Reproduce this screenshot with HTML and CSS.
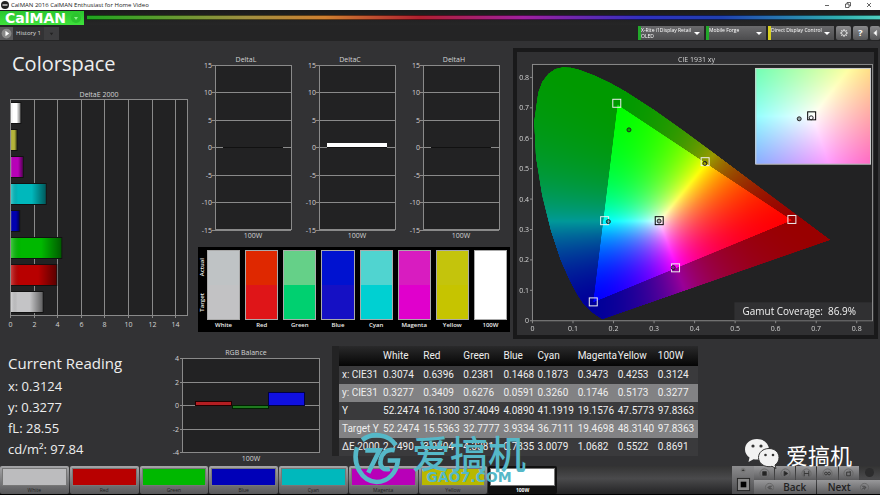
FILE: index.html
```html
<!DOCTYPE html>
<html lang="en">
<head>
    <meta charset="UTF-8">
    <meta name="viewport" content="width=device-width, initial-scale=1.0">
    <title>CalMAN 2016 CalMAN Enthusiast for Home Video</title>
    <link rel="stylesheet" href="styles.css">
</head>
<body>
    <!-- Window title -->
    <header class="titlebar">
        <svg class="app-icon" viewBox="0 0 8 8"><circle cx="4" cy="4" r="4" fill="#222"/><path d="M1.5 4h5" stroke="#ddd" stroke-width="1.4"/></svg>
        <span class="window-title">CalMAN 2016 CalMAN Enthusiast for Home Video</span>
        <button class="win-btn" aria-label="Minimize"><svg viewBox="0 0 6 6"><path d="M1 3.5h4"/></svg></button>
        <button class="win-btn" aria-label="Restore"><svg viewBox="0 0 6 6"><path d="M.5 2h3.5v3.5H.5zM2 2V.5h3.5V4H4"/></svg></button>
        <button class="win-btn" aria-label="Close"><svg viewBox="0 0 6 6"><path d="M1 1l4 4M5 1L1 5"/></svg></button>
    </header>

    <div class="brandbar">
        <button class="brand">CalMAN <svg viewBox="0 0 10 10"><circle cx="5" cy="5" r="5" fill="#2cc42e"/><path d="M3 4h4L5 7z" fill="#8df08d"/></svg></button>
        <div class="rainbow"></div>
    </div>

    <nav class="toolbar">
        <button class="play" aria-label="Play"><svg viewBox="0 0 12 12"><circle cx="6" cy="6" r="4.5" fill="#8a8a8a"/><path d="M5 3.5v5L8.5 6z" fill="#fff"/></svg></button>
        <a class="tab" href="#">History 1</a>
        <button class="add-tab" aria-label="Add tab"><svg viewBox="0 0 8 8"><path d="M2 3h4L4 6z" fill="#222"/></svg></button>
        <div class="devices">
            <label class="device"><select aria-label="Meter"><option>X-Rite i1Display Retail</option></select><span>OLED</span></label>
            <label class="device source"><select aria-label="Source"><option>Mobile Forge</option></select></label>
            <label class="device display"><select aria-label="Display"><option>Direct Display Control</option></select></label>
            <button class="tool" aria-label="Settings"><svg viewBox="0 0 12 12"><circle cx="6" cy="6" r="2.5"/><path d="M6 2v1.5M6 8.5V10M2 6h1.5M8.5 6H10M3.2 3.2l1 1M7.8 7.8l1 1M3.2 8.8l1-1M7.8 4.2l1-1"/></svg></button>
            <button class="tool" aria-label="Help">?</button>
            <button class="tool last" aria-label="Collapse"><svg viewBox="0 0 12 12"><path d="M8 3v6L4.5 6z" fill="#fff"/></svg></button>
        </div>
    </nav>

    <main>
        <section class="top">
            <div class="errors">
                <h1>Colorspace</h1>
                <svg id="deltaE" viewBox="0 0 195 247"></svg>
            </div>

            <div class="middle">
                <div class="deltas" id="deltas"></div>
                <div class="swatches">
                    <div class="side"><span>Actual</span><span>Target</span></div>
                    <div class="patches" id="patches"></div>
                </div>
            </div>

            <div class="cie">
                <canvas id="gamut" width="1432" height="1136"></canvas>
                <svg id="cieAxes" viewBox="0 0 358 284"></svg>
            </div>
        </section>

        <section class="bottom">
            <div class="reading">
                <h2>Current Reading</h2>
                <p>x: 0.3124</p>
                <p>y: 0.3277</p>
                <p>fL: 28.55</p>
                <p>cd/m²: 97.84</p>
            </div>
            <div class="balance">
                <svg id="balance" viewBox="0 0 155 120"></svg>
            </div>
            <div class="results">
                <table>
                    <thead>
                        <tr><th class="name"></th><th>White</th><th>Red</th><th>Green</th><th class="narrow">Blue</th><th>Cyan</th><th>Magenta</th><th>Yellow</th><th>100W</th></tr>
                    </thead>
                    <tbody>
                        <tr><th class="name">x: CIE31</th><td>0.3074</td><td>0.6396</td><td>0.2381</td><td>0.1468</td><td>0.1873</td><td>0.3473</td><td>0.4253</td><td>0.3124</td></tr>
                        <tr><th class="name">y: CIE31</th><td>0.3277</td><td>0.3409</td><td>0.6276</td><td>0.0591</td><td>0.3260</td><td>0.1746</td><td>0.5173</td><td>0.3277</td></tr>
                        <tr><th class="name">Y</th><td>52.2474</td><td>16.1300</td><td>37.4049</td><td>4.0890</td><td>41.1919</td><td>19.1576</td><td>47.5773</td><td>97.8363</td></tr>
                        <tr><th class="name">Target Y</th><td>52.2474</td><td>15.5363</td><td>32.7777</td><td>3.9334</td><td>36.7111</td><td>19.4698</td><td>48.3140</td><td>97.8363</td></tr>
                        <tr><th class="name">ΔE 2000</th><td>2.7490</td><td>3.9204</td><td>4.3381</td><td>0.7835</td><td>3.0079</td><td>1.0682</td><td>0.5522</td><td>0.8691</td></tr>
                    </tbody>
                </table>
            </div>
        </section>
    </main>

    <footer>
        <div class="levels" id="levels"></div>
        <div class="controls">
            <div class="stop">
                <svg viewBox="0 0 22 12"><circle cx="11" cy="5" r="3" fill="#777"/><path d="M9 6l2-2 2 2z" fill="#333"/></svg>
                <button aria-label="Stop"><svg viewBox="0 0 16 16"><rect x="1.5" y="1.5" width="13" height="13" fill="#888" stroke="#222"/><rect x="5" y="5" width="6" height="6" fill="#000"/></svg></button>
            </div>
            <div class="actions">
                <button aria-label="Halt"><svg viewBox="0 0 12 12"><circle cx="6" cy="6" r="5"/><path d="M4 4h4v4H4z" class="solid"/></svg></button>
                <button aria-label="Read"><svg viewBox="0 0 12 12"><circle cx="6" cy="6" r="5"/><path d="M4.5 3.5v5L8.5 6z" class="solid"/></svg></button>
                <button aria-label="Read series"><svg viewBox="0 0 12 12"><circle cx="6" cy="6" r="5"/><path d="M3.5 3v6M8.5 3v6M3.5 6h5"/></svg></button>
                <button aria-label="Continuous"><svg viewBox="0 0 12 12"><circle cx="6" cy="6" r="5"/><circle cx="4.3" cy="6" r="1.5" class="dark"/><circle cx="7.7" cy="6" r="1.5" class="dark"/></svg></button>
                <button aria-label="Refresh"><svg viewBox="0 0 12 12"><circle cx="6" cy="6" r="5"/><path d="M8 4.5H4v4h4zM7 3l1.5 1.5"/></svg></button>
                <span class="knob"></span>
                <button class="step"><svg viewBox="0 0 12 12"><circle cx="6" cy="6" r="4.5"/><path d="M6.5 4l-2 2 2 2M8.5 4l-2 2 2 2"/></svg>Back</button>
                <button class="step">Next<svg viewBox="0 0 12 12"><circle cx="6" cy="6" r="4.5"/><path d="M3.5 4l2 2-2 2M5.5 4l2 2-2 2"/></svg></button>
            </div>
        </div>
    </footer>

    <!-- Watermarks -->
    <div class="mark-center" lang="zh">
        <svg viewBox="0 0 50 52" fill="none" stroke="#55b8c8" stroke-width="4.5">
            <path d="M9 8C19 0 35 2 42 13"/>
            <path d="M4 15C-1 31 8 48 23 49C35 49 43 39 44 28H34"/>
            <path d="M12 18H26L15 40"/>
            <path d="M41 18C33 16 28 21 27 28C26 34 30 38 36 36"/>
        </svg>
        <div>
            <strong>爱搞机</strong>
            <span>GAO7.COM</span>
        </div>
    </div>
    <div class="mark-corner" lang="zh">
        <svg viewBox="0 0 36 31">
            <path d="M13 1C6 1 1 5.5 1 11.5c0 3.5 1.8 6 4.5 8L4.5 24l5-2.8c1.2.3 2.3.4 3.5.4 7 0 12-4.5 12-10.1S20 1 13 1z" fill="#f2f2f2"/>
            <path d="M25 10.5c-6 0-10.5 4-10.5 9s4.5 9.2 10.5 9.2c1 0 2-.1 3-.4l4 2.2-1-3.5c2.5-1.7 4-4.3 4-7.5 0-5-4-9-10-9z" fill="#f2f2f2" stroke="#333" stroke-width="1"/>
            <g fill="#333"><circle cx="9" cy="8" r="1.6"/><circle cx="17" cy="8" r="1.6"/><circle cx="21.5" cy="17" r="1.3"/><circle cx="29" cy="17" r="1.3"/></g>
        </svg>
        <span>爱搞机</span>
    </div>

    <script src="script.js"></script>
</body>
</html>
```

FILE: styles.css
```css
* {
    box-sizing: border-box;
}
body {
    margin: 0;
    min-height: 100vh;
    display: flex;
    flex-direction: column;
    position: relative;
    background: #323234;
    color: #eee;
    font-family: "Open Sans", "Noto Sans", "Noto Sans CJK SC", sans-serif;
}
button {
    border: 0;
    padding: 0;
    background: none;
    color: inherit;
    font: inherit;
    cursor: pointer;
}
svg {
    display: block;
}

/* window frame */
.titlebar {
    display: flex;
    align-items: center;
    height: 10px;
    padding: 0 8px 0 1px;
    background: #fff;
    color: #222;
    font-size: 6px;
}
.app-icon {
    width: 8px;
    height: 8px;
    margin-right: 2px;
}
.window-title {
    flex: 1;
}
.win-btn {
    width: 6px;
    margin-left: 15px;
}
.win-btn svg {
    fill: none;
    stroke: #222;
    stroke-width: 0.7;
}
.brandbar {
    display: flex;
    align-items: center;
    gap: 3px;
    height: 15px;
    background: linear-gradient(#1b1b1b, #262627);
}
.brand {
    display: flex;
    align-items: center;
    justify-content: space-between;
    width: 84px;
    height: 14px;
    padding: 0 3px 0 5px;
    background: linear-gradient(#2bc52e, #3fe23c);
    color: #fff;
    font: bold 14px/14px "DejaVu Sans", sans-serif;
}
.brand svg {
    width: 10px;
}
.rainbow {
    flex: 1;
    height: 5px;
    border: solid #0008;
    border-width: 1px 0;
    background: linear-gradient(90deg, #1fa51f, #a09040 20%, #d08030 30%, #b02030 42%, #a020a0 55%, #3030c0 70%, #2040b0 80%, #30b0b0 95%, #50d0c0);
}
.toolbar {
    display: flex;
    align-items: center;
    height: 16px;
    background: #242425;
    font-size: 6px;
}
.play {
    width: 13px;
    height: 13px;
    background: #5a5a5c;
}
.tab {
    height: 13px;
    padding: 0 3px;
    background: #333335;
    color: #ddd;
    line-height: 13px;
    text-decoration: none;
}
.add-tab {
    width: 15px;
    height: 13px;
    padding: 0 4px;
    background: #3d3d3f;
}
.devices {
    display: flex;
    gap: 2px;
    margin-left: auto;
}
.device {
    position: relative;
    display: flex;
    flex-direction: column;
    width: 66px;
    height: 14px;
    border-left: 3px solid #22a82a;
    background: linear-gradient(#6a6a6c, #4c4c4e);
    color: #fff;
    font: 5px/6px "Open Sans", sans-serif;
}
.device::after {
    content: "";
    position: absolute;
    right: 4px;
    top: 6px;
    border: solid transparent;
    border-width: 3px 3px 0;
    border-top-color: #fff;
}
.device.source {
    width: 60px;
}
.device.display {
    border-left-color: #d8d020;
}
.device select {
    appearance: none;
    width: 100%;
    height: 7px;
    padding: 0;
    border: 0;
    background: none;
    color: inherit;
    font: inherit;
}
.tool {
    width: 15px;
    height: 14px;
    border-radius: 2px;
    background: linear-gradient(#8a8a8c, #555557);
    color: #fff;
    font-size: 9px;
    font-weight: bold;
    line-height: 14px;
}
.tool svg {
    width: 12px;
    margin: 0 auto;
    fill: none;
    stroke: #ddd;
}
.tool.last {
    width: 10px;
}
.tool.last svg {
    width: 10px;
}

/* charts */
main {
    flex: 1;
}
.top {
    display: grid;
    grid-template-columns: 195fr 318fr 367fr;
}
h1 {
    height: 47px;
    margin: 0;
    padding-left: 12px;
    font-size: 20px;
    font-weight: normal;
    line-height: 45px;
}
.middle {
    padding: 12px 3px 0 0;
}
.deltas {
    display: grid;
    grid-template-columns: repeat(3, 1fr);
    padding-right: 3px;
}
.chart-text {
    fill: #d4d4d4;
    font-size: 7px;
}
.plot {
    fill: #222223;
}
.line {
    fill: none;
    stroke: #8a8a8a;
}
.swatches {
    display: flex;
    margin-left: 3px;
    padding: 3px 3px 2px 0;
    background: #000;
    font-size: 6px;
    font-weight: 600;
}
.side {
    display: flex;
    flex-direction: column;
    justify-content: space-around;
    align-items: center;
    width: 9px;
    height: 70px;
}
.side span {
    writing-mode: vertical-rl;
    transform: rotate(180deg);
    line-height: 9px;
}
.patches {
    flex: 1;
    display: grid;
    grid-template-columns: repeat(8, 1fr);
    gap: 5px;
    text-align: center;
    line-height: 10px;
}
.patch {
    height: 70px;
    border: 1px solid #aaa;
}
.cie {
    display: grid;
    align-self: start;
    margin: 7px 2px 0 0;
    border: 4px solid #19191a;
    background: #303032;
}
.cie > * {
    grid-area: 1 / 1;
    width: 100%;
    height: auto;
}
.coverage {
    fill: #f2f2f2;
    font-size: 10px;
}

/* readings */
.bottom {
    display: grid;
    grid-template-columns: 170fr 155fr 555fr;
    padding-top: 5px;
}
.reading {
    padding: 8px 0 0 8px;
}
.reading h2 {
    margin: 0 0 2px;
    font-size: 15px;
    font-weight: normal;
    line-height: 22px;
}
.reading p {
    margin: 0;
    font-size: 13px;
    line-height: 21px;
}
.results {
    padding: 2px 0 0 7px;
}
table {
    table-layout: fixed;
    width: 366px;
    border-collapse: separate;
    border-spacing: 0;
    border-left: 7px solid #232324;
    background: #3a3a3c;
    font-family: Roboto, "Open Sans", sans-serif;
    font-size: 10px;
}
th, td {
    width: 40px;
    height: 18px;
    padding: 0;
    font-weight: normal;
    line-height: 18px;
    text-align: left;
    white-space: nowrap;
}
.name {
    width: 44px;
    padding-left: 3px;
}
.narrow {
    width: 34px;
}
thead {
    background: linear-gradient(#2a2a2b, #050505);
}
thead th {
    height: 20px;
}
tbody tr:nth-child(even) {
    background: #828284;
}

/* level buttons and transport */
footer {
    display: grid;
    grid-template-columns: 557fr 175fr 148fr;
    height: 29px;
    border-bottom: 1px solid #000;
    background: linear-gradient(#333, #4a4a4c 45%, #232324);
}
.levels {
    display: grid;
    grid-template-columns: repeat(8, 1fr);
    gap: 1px;
}
.level {
    display: flex;
    flex-direction: column;
    padding: 2px 2px 0;
    border-radius: 2px;
    background: linear-gradient(#a5a5a7, #58585a);
    color: #222;
    font-size: 5px;
    line-height: 8px;
}
.level i {
    align-self: stretch;
    height: 18px;
    border: 1px solid #777;
}
.level.active {
    background: #111;
    color: #fff;
    font-weight: bold;
}
.controls {
    grid-column: 3;
    display: flex;
}
.stop {
    width: 22px;
    background: linear-gradient(#8c8c8e, #4c4c4e);
}
.stop > svg {
    height: 10px;
    margin: 0 auto;
}
.stop button {
    display: block;
    width: 15px;
    margin: 1px auto;
}
.actions {
    flex: 1;
    display: grid;
    grid-template-columns: repeat(6, 1fr);
    grid-template-rows: 14px 14px;
    gap: 0 1px;
}
.actions button {
    display: flex;
    align-items: center;
    justify-content: center;
    background: linear-gradient(#98989a, #5c5c5e);
}
.actions svg {
    width: 11px;
    fill: none;
    stroke: #333;
    stroke-width: 1;
}
.actions circle {
    stroke: #666;
}
.actions .dark {
    stroke: #333;
}
.actions .solid {
    fill: #222;
}
.actions .step {
    grid-column: span 3;
    gap: 8px;
    color: #222;
    font-size: 10px;
    font-weight: 600;
}
.knob {
    width: 9px;
    height: 9px;
    margin: 2px auto;
    border-radius: 50%;
    background: #2c2c2d;
}

/* watermarks lie over the page */
.mark-center {
    position: absolute;
    left: 353px;
    bottom: 10px;
    display: flex;
    align-items: center;
    gap: 8px;
    color: #55b8c8;
    text-align: center;
    pointer-events: none;
}
.mark-center svg {
    width: 51px;
}
.mark-center strong {
    display: block;
    font: 500 38px/38px "Noto Sans CJK SC", sans-serif;
}
.mark-center span {
    display: block;
    font: bold 14px/12px "DejaVu Sans", sans-serif;
}
.mark-corner {
    position: absolute;
    right: 28px;
    bottom: 26px;
    display: flex;
    align-items: center;
    gap: 6px;
    color: #fff;
    font: 22px/30px "Noto Sans CJK SC", sans-serif;
    pointer-events: none;
}
.mark-corner svg {
    width: 36px;
}
```

FILE: script.js
```js
const text = (x, y, s, anchor = "middle") =>
    `<text class="chart-text" x="${x}" y="${y}" text-anchor="${anchor}">${s}</text>`;
const line = (x1, y1, x2, y2) =>
    `<path class="line" d="M${x1} ${y1}L${x2} ${y2}"/>`;

// DeltaE 2000, horizontal bars
function drawDeltaE() {
    const bars = [
        ["#ffffff", 0.87], ["#b5b53a", 0.55], ["#b800b8", 1.07], ["#00b8bc", 3.01],
        ["#0000b0", 0.78], ["#00b800", 4.34], ["#b80000", 3.92], ["#c4c4c6", 2.75]
    ];
    const unit = 11.8;
    let out = `<defs><linearGradient id="shade"><stop offset="0" stop-color="#fff" stop-opacity=".25"/><stop offset=".2" stop-color="#000" stop-opacity="0"/><stop offset=".6" stop-color="#000" stop-opacity="0"/><stop offset="1" stop-color="#000" stop-opacity=".5"/></linearGradient></defs>`;
    out += text(99, 9, "DeltaE 2000");
    out += `<rect class="plot" x="10.5" y="11.5" width="177" height="216"/>`;
    for (let v = 0; v <= 14; v += 2) {
        const x = Math.round(10 + v * unit) + 0.5;
        out += line(x, 11.5, x, 230) + text(x, 239, v);
    }
    bars.forEach(([color, value], i) => {
        const y = 15 + i * 27;
        const w = value * unit;
        out += `<rect x="11" y="${y - 1}" width="${w}" height="22" fill="#111"/>`;
        out += `<rect x="11" y="${y}" width="${w - 1}" height="20" fill="${color}"/>`;
        out += `<rect x="11" y="${y}" width="${w - 1}" height="20" fill="url(#shade)"/>`;
    });
    out += `<rect class="line" x="10.5" y="11.5" width="177" height="216"/>`;
    document.getElementById("deltaE").innerHTML = out;
}

// DeltaL, DeltaC and DeltaH
function drawDeltas() {
    const charts = [["DeltaL", 0], ["DeltaC", 0.7], ["DeltaH", 0]];
    document.getElementById("deltas").innerHTML = charts.map(([name, value]) => {
        let out = text(51, 9, name) + `<rect class="plot" x="20.5" y="12.5" width="76" height="164"/>`;
        for (let v = 15; v >= -15; v -= 5) {
            const y = Math.round(94 - v * 5.5) + 0.5;
            out += line(17, y, 96, y) + text(17, y + 2.5, v, "end");
        }
        out += `<path d="M28 94.5h60" stroke="#111" stroke-width="1"/>`;
        if (value) {
            out += `<rect x="28" y="90" width="60" height="4" fill="#fff"/>`;
        }
        out += `<rect class="line" x="20.5" y="12.5" width="76" height="164"/>` + text(58, 185, "100W");
        return `<svg viewBox="0 0 104 194">${out}</svg>`;
    }).join("");
}

// RGB Balance
function drawBalance() {
    let out = text(76, 11, "RGB Balance") + `<rect class="plot" x="12.5" y="14.5" width="137" height="94"/>`;
    for (let v = 4; v >= -4; v -= 2) {
        const y = Math.round(61 - v * 11.75) + 0.5;
        out += line(10, y, 149, y) + text(9, y + 2.5, v, "end");
    }
    out += `<rect class="line" x="12.5" y="14.5" width="137" height="94"/>`;
    out += `<rect x="25.5" y="57.5" width="36" height="4" fill="#b41e22" stroke="#200"/>`;
    out += `<rect x="62.5" y="61.5" width="36" height="3" fill="#1f7a1f" stroke="#020"/>`;
    out += `<rect x="98.5" y="48.5" width="36" height="13" fill="#1010e0" stroke="#004"/>`;
    out += text(81, 117, "100W");
    document.getElementById("balance").innerHTML = out;
}

function drawPatches() {
    const patches = [
        ["White", "#bfc3c5", "#c2c2c4"], ["Red", "#df2800", "#df1518"],
        ["Green", "#65d088", "#00d070"], ["Blue", "#0012d0", "#1510c4"],
        ["Cyan", "#50d4d0", "#00d0d2"], ["Magenta", "#d81cc0", "#e000cc"],
        ["Yellow", "#c4c40c", "#c6c400"], ["100W", "#ffffff", "#ffffff"]
    ];
    document.getElementById("patches").innerHTML = patches.map(([name, actual, target]) =>
        `<div><div class="patch" style="background: linear-gradient(${actual} 50%, ${target} 50%)"></div>${name}</div>`
    ).join("");

    const levels = [
        ["White", "#bcbcbe"], ["Red", "#b80000"], ["Green", "#00b800"], ["Blue", "#0000b8"],
        ["Cyan", "#00b8bc"], ["Magenta", "#b800b8"], ["Yellow", "#b8b800"], ["100W", "#ffffff"]
    ];
    document.getElementById("levels").innerHTML = levels.map(([name, color]) =>
        `<button class="level${name === "100W" ? " active" : ""}"><i style="background: ${color}"></i>${name}</button>`
    ).join("");
}

// CIE 1931 chart
const locus = [
    [0.1741, 0.0050], [0.1714, 0.0051], [0.1644, 0.0109], [0.1566, 0.0177], [0.1440, 0.0297],
    [0.1241, 0.0578], [0.1096, 0.0868], [0.0913, 0.1327], [0.0687, 0.2007], [0.0454, 0.2950],
    [0.0235, 0.4127], [0.0082, 0.5384], [0.0039, 0.6548], [0.0139, 0.7502], [0.0240, 0.7860],
    [0.0389, 0.8120], [0.0560, 0.8280], [0.0743, 0.8338], [0.0943, 0.8325], [0.1142, 0.8262],
    [0.1547, 0.8059], [0.1929, 0.7816], [0.2296, 0.7543], [0.3016, 0.6923], [0.3731, 0.6245],
    [0.4441, 0.5547], [0.5125, 0.4866], [0.5752, 0.4242], [0.6270, 0.3725], [0.6658, 0.3340],
    [0.6915, 0.3083], [0.7347, 0.2653]
];
const primaries = [[0.64, 0.33], [0.21, 0.71], [0.15, 0.06]];
const px = x => 15.5 + x * 406.5;
const py = y => 269.5 - y * 305;

function xyToRgb(x, y, power) {
    y = Math.max(y, 0.001);
    const X = x / y, Z = (1 - x - y) / y;
    const rgb = [
        2.0414 * X - 0.5649 - 0.3447 * Z,
        -0.9693 * X + 1.8760 + 0.0416 * Z,
        0.0134 * X - 0.1184 + 1.0154 * Z
    ].map(c => Math.max(c, 0));
    const max = Math.max(...rgb);
    return rgb.map(c => 255 * Math.pow(c / max, power));
}

function colorField(w, h, power, toXy) {
    const c = document.createElement("canvas");
    c.width = w;
    c.height = h;
    const ctx = c.getContext("2d");
    const img = ctx.createImageData(w, h);
    for (let j = 0; j < h; j++) {
        for (let i = 0; i < w; i++) {
            const [x, y] = toXy(i, j);
            img.data.set([...xyToRgb(x, y, power), 255], (j * w + i) * 4);
        }
    }
    ctx.putImageData(img, 0, 0);
    return c;
}

function drawGamut() {
    const ctx = document.getElementById("gamut").getContext("2d");
    ctx.scale(4, 4);
    ctx.fillStyle = "#222223";
    ctx.fillRect(15.5, 12.5, 341, 257);

    const trace = (points) => {
        points.forEach(([x, y], i) => i ? ctx.lineTo(px(x), py(y)) : ctx.moveTo(px(x), py(y)));
        ctx.closePath();
    };
    ctx.save();
    ctx.beginPath();
    trace(locus);
    ctx.clip();
    ctx.drawImage(colorField(358, 284, 1.4, (i, j) => [(i - 15.5) / 406.5, (269.5 - j) / 305]), 0, 0);
    // darken everything outside the target triangle
    ctx.beginPath();
    ctx.rect(0, 0, 358, 284);
    trace(primaries);
    ctx.fillStyle = "rgba(0, 0, 0, 0.4)";
    ctx.fill("evenodd");
    ctx.restore();

    // enlarged white point
    ctx.drawImage(colorField(115, 96, 0.7, (i, j) => [0.3127 + (i - 57) * 0.0011, 0.329 - (j - 48) * 0.0014]), 239, 16);
}

function drawCieAxes() {
    let out = text(180, 10, "CIE 1931 xy") + `<rect class="line" x="15.5" y="12.5" width="341" height="257"/>`;
    for (let i = 0; i <= 8; i++) {
        const v = i ? i / 10 : 0;
        out += line(px(v), 269.5, px(v), 272) + text(px(v), 280, v);
        out += line(13, py(v), 15.5, py(v)) + text(12, py(v) + 2.5, v, "end");
    }
    const square = (x, y, color) => `<rect x="${x - 4}" y="${y - 4}" width="8" height="8" fill="none" stroke="${color}"/>`;
    const dot = (x, y) => `<circle cx="${x}" cy="${y}" r="2" fill="#0005" stroke="#222"/>`;
    const targets = [[0.64, 0.333], [0.208, 0.715], [0.15, 0.062], [0.178, 0.329], [0.353, 0.174], [0.426, 0.523]];
    targets.forEach(([x, y]) => out += square(px(x), py(y), "#eee"));
    const actual = [[0.2381, 0.6276], [0.1873, 0.326], [0.3473, 0.1746], [0.4253, 0.5173]];
    actual.forEach(([x, y]) => out += dot(px(x), py(y)));
    out += square(px(0.3127), py(0.329), "#000") + dot(px(0.3124), py(0.3277));
    out += `<rect x="239.5" y="16.5" width="115" height="96" fill="none" stroke="#ccc"/>`;
    out += square(295.5, 64, "#000") + dot(283, 67) + `<circle cx="295" cy="66" r="2" fill="none" stroke="#222"/>`;
    out += `<rect x="218" y="251" width="138" height="18" fill="#303032"/>`;
    out += `<text class="coverage" x="340" y="264" text-anchor="end" xml:space="preserve">Gamut Coverage:  86.9%</text>`;
    document.getElementById("cieAxes").innerHTML = out;
}

drawDeltaE();
drawDeltas();
drawBalance();
drawPatches();
drawGamut();
drawCieAxes();
```
